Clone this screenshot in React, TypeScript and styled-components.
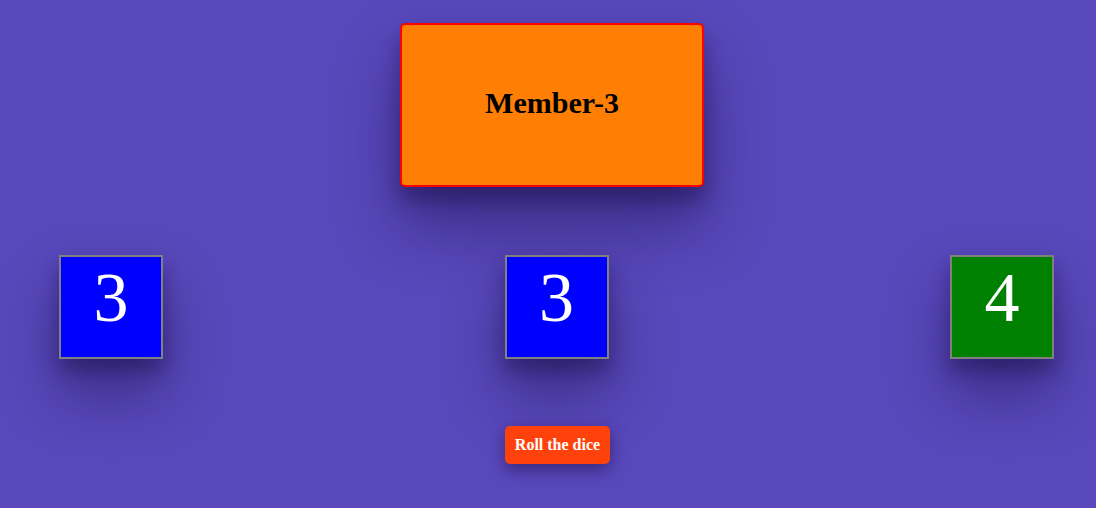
import React from "react";
import styled, { createGlobalStyle } from "styled-components";

const GlobalStyle = createGlobalStyle`
  html, body {
    margin: 0;
    padding: 0;
    background: #5948bb;
    font-family: "Liberation Serif", "Times New Roman", serif;
    overflow: hidden;
  }
`;

const Page = styled.main`
  width: 1096px;
  height: 508px;
  box-sizing: border-box;
  padding: 23px 0 0 8px;
  display: flex;
  flex-direction: column;
  align-items: stretch;
`;

const MemberCard = styled.div`
  align-self: center;
  width: 300px;
  height: 160px;
  background: #ff7f05;
  border: 2px solid #ff0000;
  border-radius: 5px;
  box-shadow: 0 14px 18px rgba(20, 10, 60, 0.35), 0 38px 64px rgba(20, 10, 60, 0.45);
  display: flex;
  align-items: center;
  justify-content: center;
`;

const MemberName = styled.h1`
  margin: 0 0 4px 0;
  font-size: 30px;
  font-weight: bold;
  color: #000;
`;

const DiceRow = styled.div`
  margin-top: 68px;
  display: flex;
  justify-content: space-between;
  padding: 0 42px 0 51px;
`;

const Die = styled.div<{ $color: string }>`
  width: 100px;
  height: 100px;
  background: ${(p) => p.$color};
  border: 2px solid #808080;
  box-shadow: 0 12px 16px rgba(20, 10, 60, 0.35), 0 34px 60px rgba(20, 10, 60, 0.45);
  color: #fff;
  font-size: 70px;
  text-align: center;
  line-height: normal;
  padding-top: 1px;
  box-sizing: content-box;
  height: 99px;
`;

const ButtonRow = styled.div`
  margin-top: 67px;
  display: flex;
  justify-content: center;
  padding-left: 11px;
`;

const RollButton = styled.button`
  font-family: "Liberation Serif", "Times New Roman", serif;
  font-weight: bold;
  font-size: 16px;
  color: #fff;
  background: #ff420c;
  border: none;
  border-radius: 5px;
  padding: 0;
  width: 105px;
  height: 38px;
  box-shadow: 0 6px 16px rgba(20, 10, 60, 0.5);
  cursor: pointer;
`;

const dice = [
  { value: 3, color: "#0000ff" },
  { value: 3, color: "#0000ff" },
  { value: 4, color: "#008000" },
];

export default function App() {
  return (
    <>
      <GlobalStyle />
      <Page>
        <MemberCard>
          <MemberName>Member-3</MemberName>
        </MemberCard>
        <DiceRow>
          {dice.map((d, i) => (
            <Die key={i} $color={d.color}>
              {d.value}
            </Die>
          ))}
        </DiceRow>
        <ButtonRow>
          <RollButton>Roll the dice</RollButton>
        </ButtonRow>
      </Page>
    </>
  );
}
